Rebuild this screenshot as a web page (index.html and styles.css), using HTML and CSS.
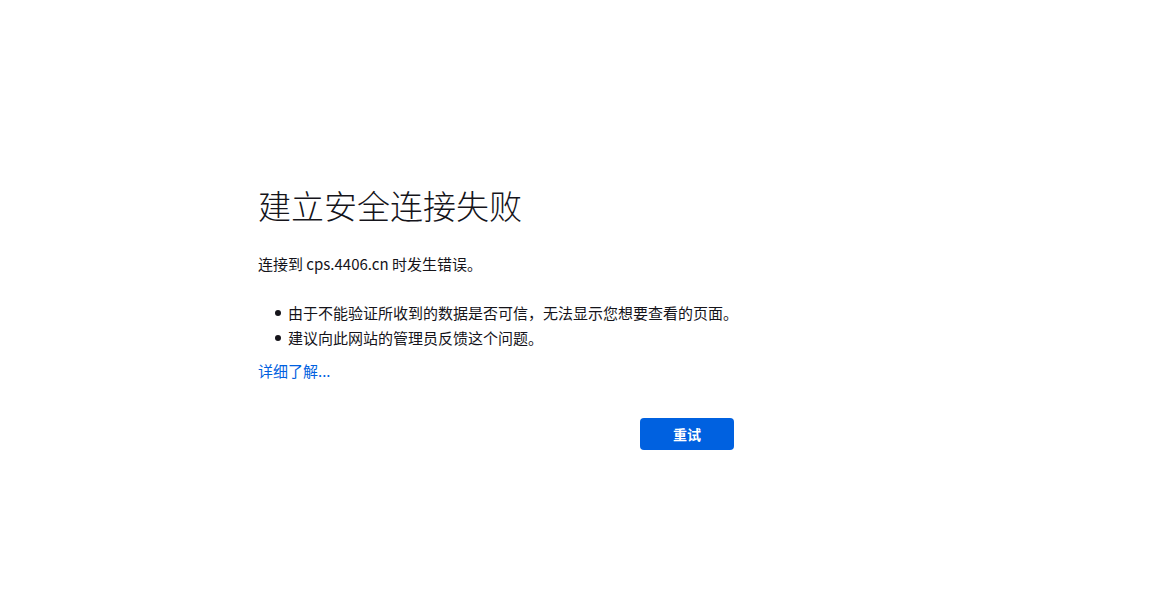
FILE: index.html
```html
<!DOCTYPE html>
<html lang="zh-CN">
<head>
<meta charset="utf-8">
<title>建立安全连接失败</title>
<link rel="stylesheet" href="styles.css">
</head>
<body>
<main class="page">
  <div class="container">
    <h1 class="title">建立安全连接失败</h1>
    <p class="desc">连接到 cps.4406.cn 时发生错误。</p>
    <ul class="list">
      <li>由于不能验证所收到的数据是否可信，无法显示您想要查看的页面。</li>
      <li>建议向此网站的管理员反馈这个问题。</li>
    </ul>
    <a class="learn" href="#">详细了解...</a>
    <div class="actions">
      <button class="retry" type="button">重试</button>
    </div>
  </div>
</main>
</body>
</html>
```
FILE: styles.css
```css
html, body {
  margin: 0;
  padding: 0;
  background: #ffffff;
}
body {
  font-family: "Noto Sans CJK SC", "Noto Sans", sans-serif;
  font-size: 15px;
  color: #15141a;
}
.page {
  padding-top: 185px;
}
.container {
  margin-left: 258px;
  width: 476px;
  display: flex;
  flex-direction: column;
}
.title {
  margin: 0;
  font-size: 33px;
  line-height: 40px;
  font-weight: 300;
  letter-spacing: 0;
}
.desc {
  margin: 28px 0 0;
  line-height: 22.5px;
}
.list {
  margin: 26.5px 0 0;
  padding-left: 17px;
  list-style: none;
}
.list li {
  display: flex;
  align-items: center;
  gap: 7px;
  line-height: 22.5px;
  margin-bottom: 2.5px;
  white-space: nowrap;
}
.list li::before {
  content: "";
  flex: none;
  width: 6px;
  height: 6px;
  border-radius: 50%;
  background: #15141a;
}
.learn {
  margin-top: 8px;
  align-self: flex-start;
  color: #0061e0;
  text-decoration: none;
  line-height: 22.5px;
}
.actions {
  margin-top: 35.5px;
  display: flex;
  justify-content: flex-end;
}
.retry {
  width: 94px;
  height: 32px;
  border: none;
  border-radius: 4px;
  background: #0061e0;
  color: #ffffff;
  font-family: "Noto Sans CJK SC", sans-serif;
  font-size: 14px;
  font-weight: 700;
  padding: 0;
}
```
